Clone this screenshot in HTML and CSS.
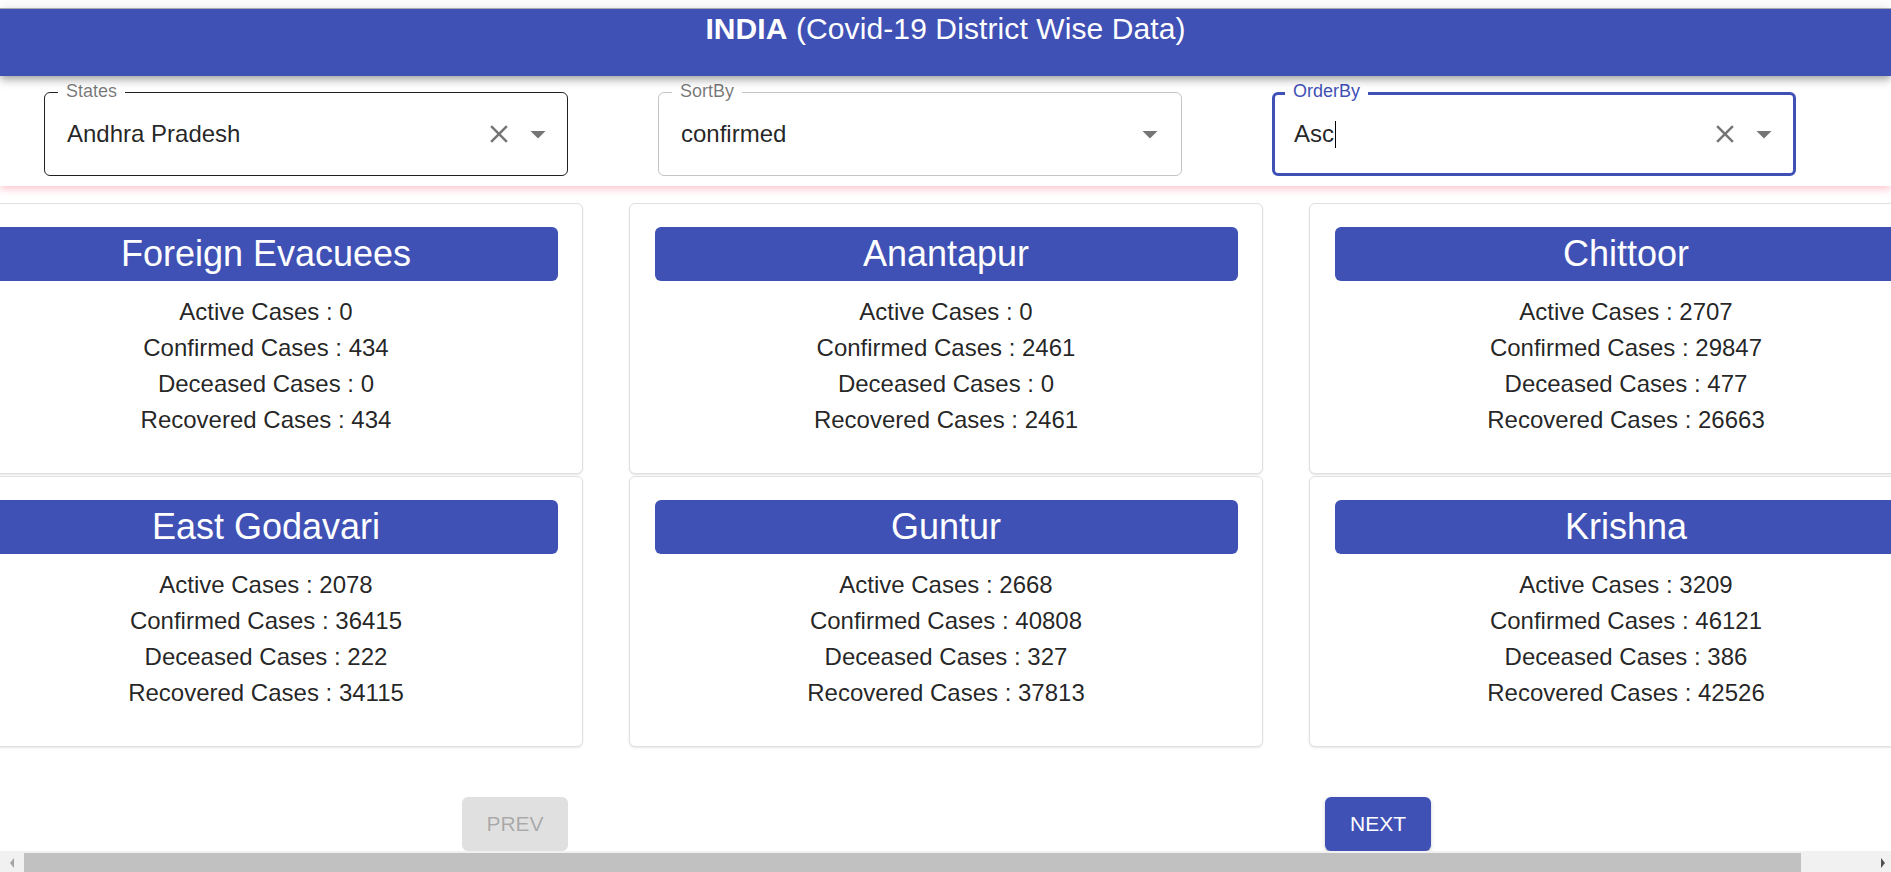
FILE: index.html
```html
<!DOCTYPE html>
<html lang="en">
<head>
<meta charset="utf-8">
<title>INDIA (Covid-19 District Wise Data)</title>
<link rel="stylesheet" href="styles.css">
</head>
<body>
<div class="page">
  <header class="appbar">
    <h1 class="title"><b>INDIA</b> (Covid-19 District Wise Data)</h1>
  </header>

  <section class="filters">
    <div class="field field--hover">
      <span class="field-label">States</span>
      <span class="field-value">Andhra Pradesh</span>
      <span class="adorn">
        <svg class="ic-clear" viewBox="0 0 24 24"><path d="M19 6.41L17.59 5 12 10.59 6.41 5 5 6.41 10.59 12 5 17.59 6.41 19 12 13.41 17.59 19 19 17.59 13.41 12z"/></svg>
        <svg class="ic-drop" viewBox="0 0 24 24"><path d="M7 10l5 5 5-5z"/></svg>
      </span>
    </div>
    <div class="field field--idle">
      <span class="field-label">SortBy</span>
      <span class="field-value">confirmed</span>
      <span class="adorn adorn--sort">
        <svg class="ic-drop" viewBox="0 0 24 24"><path d="M7 10l5 5 5-5z"/></svg>
      </span>
    </div>
    <div class="field field--focus">
      <span class="field-label">OrderBy</span>
      <span class="field-value">Asc<span class="caret"></span></span>
      <span class="adorn">
        <svg class="ic-clear" viewBox="0 0 24 24"><path d="M19 6.41L17.59 5 12 10.59 6.41 5 5 6.41 10.59 12 5 17.59 6.41 19 12 13.41 17.59 19 19 17.59 13.41 12z"/></svg>
        <svg class="ic-drop" viewBox="0 0 24 24"><path d="M7 10l5 5 5-5z"/></svg>
      </span>
    </div>
  </section>

  <main class="cards">
    <article class="card">
      <h2 class="card-title">Foreign Evacuees</h2>
      <ul class="stats">
        <li>Active Cases : 0</li>
        <li>Confirmed Cases : 434</li>
        <li>Deceased Cases : 0</li>
        <li>Recovered Cases : 434</li>
      </ul>
    </article>
    <article class="card">
      <h2 class="card-title">Anantapur</h2>
      <ul class="stats">
        <li>Active Cases : 0</li>
        <li>Confirmed Cases : 2461</li>
        <li>Deceased Cases : 0</li>
        <li>Recovered Cases : 2461</li>
      </ul>
    </article>
    <article class="card">
      <h2 class="card-title">Chittoor</h2>
      <ul class="stats">
        <li>Active Cases : 2707</li>
        <li>Confirmed Cases : 29847</li>
        <li>Deceased Cases : 477</li>
        <li>Recovered Cases : 26663</li>
      </ul>
    </article>
    <article class="card">
      <h2 class="card-title">East Godavari</h2>
      <ul class="stats">
        <li>Active Cases : 2078</li>
        <li>Confirmed Cases : 36415</li>
        <li>Deceased Cases : 222</li>
        <li>Recovered Cases : 34115</li>
      </ul>
    </article>
    <article class="card">
      <h2 class="card-title">Guntur</h2>
      <ul class="stats">
        <li>Active Cases : 2668</li>
        <li>Confirmed Cases : 40808</li>
        <li>Deceased Cases : 327</li>
        <li>Recovered Cases : 37813</li>
      </ul>
    </article>
    <article class="card">
      <h2 class="card-title">Krishna</h2>
      <ul class="stats">
        <li>Active Cases : 3209</li>
        <li>Confirmed Cases : 46121</li>
        <li>Deceased Cases : 386</li>
        <li>Recovered Cases : 42526</li>
      </ul>
    </article>
  </main>

  <nav class="pager">
    <button class="btn btn--disabled" disabled>PREV</button>
    <button class="btn btn--primary">NEXT</button>
  </nav>
</div>

<div class="hscroll">
  <span class="hscroll-arrow"><span class="tri tri--left"></span></span>
  <span class="hscroll-thumb"></span>
  <span class="hscroll-rest"><span class="tri tri--right"></span></span>
</div>
</body>
</html>
```

FILE: styles.css
```css
* { box-sizing: border-box; }

html, body {
  margin: 0;
  padding: 0;
  height: 100%;
  overflow: hidden;
  background: #fff;
}

body {
  font-family: "Liberation Sans", Arial, sans-serif;
  color: rgba(0, 0, 0, 0.87);
}

.page {
  padding-top: 8px;
}

/* ---------- header ---------- */
.appbar {
  position: relative;
  z-index: 3;
  height: 68px;
  padding-top: 2px;
  border-top: 1px solid #a9a9a9;
  background: #3f51b5;
  color: #fff;
  text-align: center;
  box-shadow: 0 3px 6px -1px rgba(0, 0, 0, 0.22),
              0 6px 8px 0 rgba(0, 0, 0, 0.12),
              0 1px 14px 0 rgba(0, 0, 0, 0.1);
}

.title {
  margin: 0;
  font-size: 30px;
  line-height: 35px;
  font-weight: 400;
  letter-spacing: 0.1px;
}

.title b { font-weight: 700; }

/* ---------- filters ---------- */
.filters {
  position: relative;
  z-index: 2;
  height: 110px;
  padding: 16px 0 0 44px;
  display: flex;
  gap: 90px;
  background: #fff;
  box-shadow: 0 3px 8px rgba(255, 60, 95, 0.3);
}

.field {
  position: relative;
  width: 524px;
  height: 84px;
  border-radius: 6px;
  display: flex;
  align-items: center;
  padding: 0 11px 0 22px;
  font-size: 24px;
}

.field--hover { border: 1px solid rgba(0, 0, 0, 0.87); }
.field--idle  { border: 1px solid rgba(0, 0, 0, 0.23); }
.field--focus { border: 3px solid #3f51b5; padding-left: 19px; padding-right: 11px; }

.field-label {
  position: absolute;
  top: -11px;
  left: 13px;
  padding: 0 8px;
  background: #fff;
  font-size: 18px;
  line-height: 18px;
  color: rgba(0, 0, 0, 0.54);
}

.field--focus .field-label {
  top: -13px;
  left: 10px;
  color: #3f51b5;
}

.field-value {
  display: flex;
  align-items: center;
  line-height: 28px;
}

.caret {
  display: inline-block;
  width: 1px;
  height: 27px;
  margin-left: 1px;
  background: #000;
}

.adorn {
  margin-left: auto;
  display: flex;
  align-items: center;
  gap: 6px;
}

.adorn--sort { margin-right: 2px; }

.ic-clear {
  width: 30px;
  height: 30px;
  fill: rgba(0, 0, 0, 0.54);
}

.ic-drop {
  width: 36px;
  height: 36px;
  fill: rgba(0, 0, 0, 0.54);
}

/* ---------- cards ---------- */
.cards {
  display: grid;
  grid-template-columns: repeat(3, 634px);
  column-gap: 46px;
  row-gap: 2px;
  justify-content: center;
  margin-top: 17px;
}

.card {
  height: 271px;
  padding: 23px 24px 0 25px;
  border: 1px solid #e0e0e0;
  border-radius: 6px;
  background: #fff;
  box-shadow: 0 1px 2px rgba(0, 0, 0, 0.1);
  text-align: center;
}

.card-title {
  margin: 0;
  height: 54px;
  line-height: 54px;
  border-radius: 6px;
  background: #3f51b5;
  color: #fff;
  font-size: 36px;
  font-weight: 400;
  white-space: nowrap;
}

.stats {
  list-style: none;
  margin: 13px 0 0;
  padding: 0;
  font-size: 24px;
  line-height: 36px;
  color: rgba(0, 0, 0, 0.87);
}

/* ---------- pager ---------- */
.pager {
  display: flex;
  gap: 757px;
  padding-left: 462px;
  margin-top: 50px;
}

.btn {
  width: 106px;
  height: 54px;
  border: 0;
  border-radius: 6px;
  font-family: "Liberation Sans", Arial, sans-serif;
  font-size: 21px;
  line-height: 24px;
  padding: 0;
}

.btn--disabled {
  background: #e0e0e0;
  color: rgba(0, 0, 0, 0.26);
}

.btn--primary {
  background: #3f51b5;
  color: #fff;
  box-shadow: 0 3px 1px -2px rgba(0, 0, 0, 0.2),
              0 2px 2px 0 rgba(0, 0, 0, 0.14),
              0 1px 5px 0 rgba(0, 0, 0, 0.12);
}

/* ---------- fake horizontal scrollbar (overlay) ---------- */
.hscroll {
  position: fixed;
  left: 0;
  right: 0;
  bottom: 0;
  z-index: 10;
  height: 21px;
  padding-top: 2px;
  display: flex;
  background: #f1f1f1;
}

.hscroll-arrow {
  flex: 0 0 24px;
  display: flex;
  align-items: center;
  justify-content: center;
}

.hscroll-thumb {
  flex: 0 0 1777px;
  background: #c1c1c1;
}

.hscroll-rest {
  flex: 1;
  display: flex;
  align-items: center;
  justify-content: flex-end;
  padding-right: 6px;
}

.tri {
  width: 0;
  height: 0;
  border-top: 5px solid transparent;
  border-bottom: 5px solid transparent;
}

.tri--left { border-right: 4px solid #a3a3a3; }
.tri--right { border-left: 4px solid #505050; }
```
